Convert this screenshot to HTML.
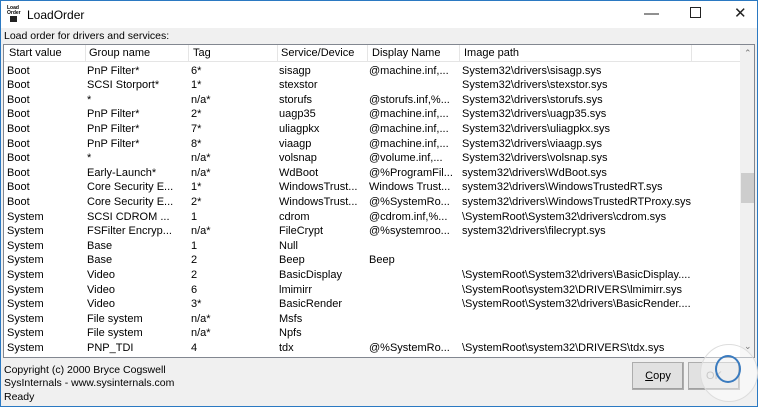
<!DOCTYPE html>
<html><head><meta charset="utf-8"><style>
*{margin:0;padding:0;box-sizing:border-box}
body{width:758px;height:407px;overflow:hidden;background:#f0f0f0;font-family:"Liberation Sans",sans-serif;font-size:11px;color:#000;position:relative}
.win{position:absolute;left:0;top:0;width:758px;height:407px;border:1px solid #2b79c2}
.title{position:absolute;left:1px;top:1px;width:756px;height:27px;background:#fff}
.title .t{position:absolute;left:26px;top:7px;font-size:12px}
.icon{position:absolute;left:6px;top:5px;width:13px;height:16px;font-size:5px;line-height:5px;font-weight:bold}
.ctl{position:absolute;top:4px;font-size:15px;color:#222}
.lbl{position:absolute;left:4px;top:30px;font-size:10.5px}
.list{position:absolute;left:3px;top:44px;width:752px;height:314px;background:#fff;border:1px solid #828790;overflow:hidden}
.hdr{position:absolute;left:0;top:0;height:17px;width:736px;background:#fff;border-bottom:1px solid #e5e5e5}
.hdr span{position:absolute;top:2px;font-size:11px}
.hdr i{position:absolute;top:0;width:1px;height:17px;background:#e5e5e5}
.row{position:absolute;left:0;height:14.6px;width:736px;white-space:nowrap}
.row span{position:absolute;top:0}
.sb{position:absolute;left:736px;top:0;width:15px;height:312px;background:#f0f0f0}
.thumb{position:absolute;left:1px;top:128px;width:13px;height:30px;background:#cdcdcd}
.btn{position:absolute;top:362px;height:28px;border:1px solid #adadad;background:#e1e1e1;text-align:center;line-height:26px;box-shadow:inset -1px -1px #a0a0a0}
.bt{position:absolute;left:4px;font-size:10.5px}
</style></head><body><div class="win"></div>
<div class="title"><div class="icon">Load<br>Order<div style="width:7px;height:6px;background:#222;margin-left:3px"></div></div><div class="t">LoadOrder</div>
<div class="ctl" style="left:643px">&#8212;</div><div class="ctl" style="left:689px;top:6px;width:11px;height:11px;border:1px solid #222"></div><div class="ctl" style="left:733px;top:3px">&#10005;</div></div>
<div class="lbl">Load order for drivers and services:</div>
<div class="list">
<div class="hdr"><span style="left:5px">Start value</span><i style="left:81px"></i><span style="left:85px">Group name</span><i style="left:184px"></i><span style="left:189px">Tag</span><i style="left:273px"></i><span style="left:277px">Service/Device</span><i style="left:363px"></i><span style="left:368px">Display Name</span><i style="left:455px"></i><span style="left:460px">Image path</span><i style="left:687px"></i></div>
<div id="rows"></div>
<div class="sb"><div style="position:absolute;left:4px;top:3px;font-size:9px;color:#777">&#8963;</div><div class="thumb"></div><div style="position:absolute;left:4px;top:296px;font-size:9px;color:#777">&#8964;</div></div>
</div>
<div class="bt" style="top:364px">Copyright (c) 2000 Bryce Cogswell</div>
<div class="bt" style="top:377px">SysInternals - www.sysinternals.com</div>
<div class="bt" style="top:391px">Ready</div>
<div class="btn" style="left:632px;width:52px"><u>C</u>opy</div>
<div class="btn" style="left:688px;width:52px;color:#999">OK</div>
<div style="position:absolute;left:700px;top:344px;width:58px;height:58px;border-radius:50%;background:rgba(255,255,255,.45);border:1px solid #ddd"></div>
<div style="position:absolute;left:715px;top:355px;width:26px;height:28px;border:2px solid #3a7bbf;border-radius:50%"></div>
<script>
var d=[["Boot","PnP Filter*","6*","sisagp","@machine.inf,...","System32\\drivers\\sisagp.sys"],
["Boot","SCSI Storport*","1*","stexstor","","System32\\drivers\\stexstor.sys"],
["Boot","*","n/a*","storufs","@storufs.inf,%...","System32\\drivers\\storufs.sys"],
["Boot","PnP Filter*","2*","uagp35","@machine.inf,...","System32\\drivers\\uagp35.sys"],
["Boot","PnP Filter*","7*","uliagpkx","@machine.inf,...","System32\\drivers\\uliagpkx.sys"],
["Boot","PnP Filter*","8*","viaagp","@machine.inf,...","System32\\drivers\\viaagp.sys"],
["Boot","*","n/a*","volsnap","@volume.inf,...","System32\\drivers\\volsnap.sys"],
["Boot","Early-Launch*","n/a*","WdBoot","@%ProgramFil...","system32\\drivers\\WdBoot.sys"],
["Boot","Core Security E...","1*","WindowsTrust...","Windows Trust...","system32\\drivers\\WindowsTrustedRT.sys"],
["Boot","Core Security E...","2*","WindowsTrust...","@%SystemRo...","system32\\drivers\\WindowsTrustedRTProxy.sys"],
["System","SCSI CDROM ...","1","cdrom","@cdrom.inf,%...","\\SystemRoot\\System32\\drivers\\cdrom.sys"],
["System","FSFilter Encryp...","n/a*","FileCrypt","@%systemroo...","system32\\drivers\\filecrypt.sys"],
["System","Base","1","Null","",""],
["System","Base","2","Beep","Beep",""],
["System","Video","2","BasicDisplay","","\\SystemRoot\\System32\\drivers\\BasicDisplay...."],
["System","Video","6","lmimirr","","\\SystemRoot\\system32\\DRIVERS\\lmimirr.sys"],
["System","Video","3*","BasicRender","","\\SystemRoot\\System32\\drivers\\BasicRender...."],
["System","File system","n/a*","Msfs","",""],
["System","File system","n/a*","Npfs","",""],
["System","PNP_TDI","4","tdx","@%SystemRo...","\\SystemRoot\\system32\\DRIVERS\\tdx.sys"],
["System","PNP_TDI","n/a*","AFD","@%systemro...","\\SystemRoot\\system32\\drivers\\afd.sys"]];
var x=[3,83,187,275,365,458],h="";
d.forEach(function(r,i){h+='<div class="row" style="top:'+(19.5+i*14.6)+'px">';r.forEach(function(c,j){h+='<span style="left:'+x[j]+'px">'+c+'</span>'});h+='</div>'});
document.getElementById('rows').innerHTML=h;
</script>
</body></html>
